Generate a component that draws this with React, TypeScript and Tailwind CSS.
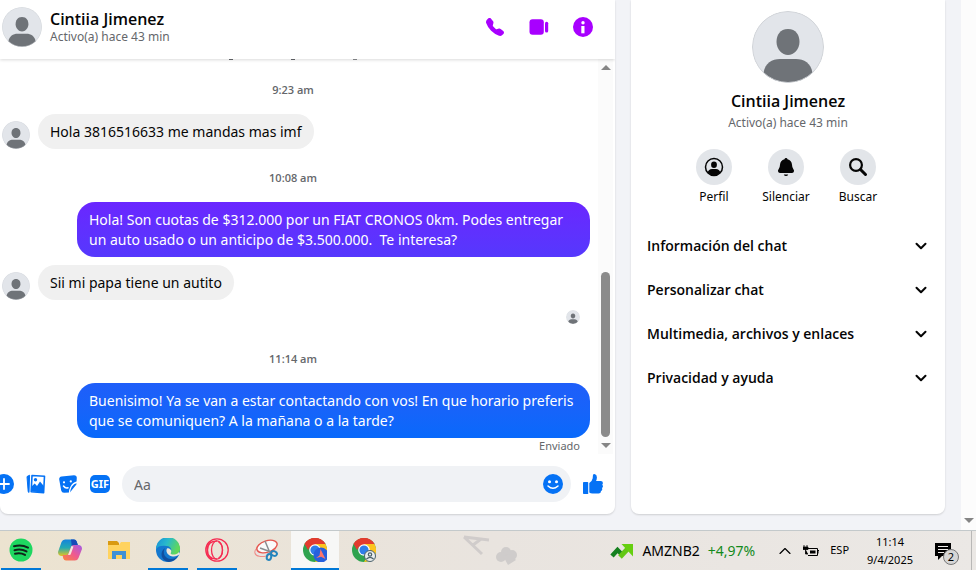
import type { ReactNode } from "react";
import { BsTelephoneFill } from "react-icons/bs";
import { ChevronDown, ChevronUp } from "lucide-react";

const messages = {
  lead: "Hola 3816516633 me mandas mas imf",
  offer: ["Hola! Son cuotas de $312.000 por un FIAT CRONOS 0km. Podes entregar", "un auto usado o un anticipo de $3.500.000.  Te interesa?"],
  reply: "Sii mi papa tiene un autito",
  followUp: ["Buenisimo! Ya se van a estar contactando con vos! En que horario preferis", "que se comuniquen? A la mañana o a la tarde?"],
};

const sections = ["Información del chat", "Personalizar chat", "Multimedia, archivos y enlaces", "Privacidad y ayuda"];

const Avatar = ({ className }: { className: string }) => (
  <svg viewBox="0 0 72 72" className={`shrink-0 rounded-full ${className}`} aria-hidden="true">
    <circle cx="36" cy="36" r="36" fill="#e2e5ea" />
    <path d="M36 18c8 0 11.500 6 11.500 13S42 44 36 44s-11.500-6-11.500-13S28 18 36 18z" fill="#6f7378" />
    <path d="M11.500 62C13 52 20 48 28 48h16c8 0 15 4 16.500 14A36 36 0 0 1 11.500 62z" fill="#6f7378" />
    <circle cx="36" cy="36" r="35.500" fill="none" stroke="#d0d3d7" />
  </svg>
);

const TimeLabel = ({ children }: { children: ReactNode }) => (
  <div className="pt-5 pb-[15px] pr-1.5 text-center font-['Open_Sans',sans-serif] text-[11px] font-semibold leading-[18px] text-[#65676b]">{children}</div>
);

const Incoming = ({ children }: { children: ReactNode }) => (
  <div className="flex items-end gap-2">
    <Avatar className="size-7" />
    <p className="rounded-[18px] bg-[#f0f0f0] px-3 pt-2 pb-[7px] text-[14px] leading-5 text-[#050505]">{children}</p>
  </div>
);

const Outgoing = ({ lines, className }: { lines: string[]; className: string }) => (
  <p className={`ml-[75px] rounded-[18px] px-3 pt-2 pb-[7px] text-[14px] leading-5 text-white ${className}`}>
    {lines.map((line) => (
      <span key={line} className="block whitespace-pre">
        {line}
      </span>
    ))}
  </p>
);

const Arrow = ({ up }: { up?: boolean }) => (
  <svg viewBox="0 0 10 5" className="h-[5px] w-2.5" aria-hidden="true">
    <path d={up ? "M0 5 5 0l5 5z" : "M0 0l5 5 5-5z"} fill="#858585" />
  </svg>
);

const ChatHeader = () => (
  <header className="z-10 flex h-[59px] shrink-0 items-center bg-white pl-0.5 pr-3.5 pb-[5px] shadow-[0_1px_3px_rgba(0,0,0,0.15)]">
    <Avatar className="size-10" />
    <div className="ml-2 flex-1">
      <h1 className="font-['Open_Sans',sans-serif] text-[16px] font-semibold leading-5 text-[#050505]">Cintiia Jimenez</h1>
      <p className="text-[12px] leading-4 text-[#65676b]">Activo(a) hace 43 min</p>
    </div>
    <div className="flex gap-2 text-[#a800ff]">
      <button aria-label="Llamar" className="flex size-9 items-center justify-center">
        <BsTelephoneFill className="size-[18px]" />
      </button>
      <button aria-label="Videollamada" className="flex size-9 items-center justify-center">
        <svg viewBox="0 0 20 20" className="size-5" fill="currentColor">
          <rect x="0.500" y="2.200" width="14.300" height="15.600" rx="3" />
          <rect x="16" y="4.800" width="3.200" height="10.600" rx="1.500" />
        </svg>
      </button>
      <button aria-label="Información" className="flex size-9 items-center justify-center">
        <svg viewBox="0 0 20 20" className="size-5">
          <circle cx="10" cy="10" r="10" fill="currentColor" />
          <circle cx="10" cy="5.800" r="1.700" fill="#fff" />
          <path d="M8.300 9h3.200v7.300H8.300z" fill="#fff" />
        </svg>
      </button>
    </div>
  </header>
);

const Composer = () => (
  <form className="flex h-[60px] shrink-0 items-center pr-3 text-[#0572f5]">
    <div className="-ml-3 flex">
      <button type="button" aria-label="Más acciones" className="flex w-8 justify-center">
        <svg viewBox="0 0 20 20" className="size-5">
          <circle cx="10" cy="10" r="10" fill="currentColor" />
          <path d="M10 5v10M5 10h10" stroke="#fff" strokeWidth="1.800" strokeLinecap="round" />
        </svg>
      </button>
      <button type="button" aria-label="Adjuntar foto" className="flex w-8 justify-center">
        <svg viewBox="0 0 20 20" className="size-5">
          <path d="M1 2.600 3.600 1.200 3 18.500 2.200 17.800z" fill="currentColor" stroke="currentColor" strokeLinejoin="round" />
          <path d="M6 1.500 18.500 2.200 17.600 18.700 5.200 17.800z" fill="#fff" stroke="currentColor" strokeWidth="1.600" strokeLinejoin="round" />
          <path d="M5.500 12.500 8.700 9.500l2.300 2.400 3-4.300 4 4.600-.3 6.200-12.400-.8z" fill="currentColor" />
          <circle cx="9.500" cy="5.800" r="1.700" fill="currentColor" />
        </svg>
      </button>
      <button type="button" aria-label="Elegir sticker" className="flex w-8 justify-center">
        <svg viewBox="0 0 20 20" className="size-5">
          <path d="M3.600 2.400 16 1.200q2.800 0 2.800 2.500l-.4 6.800-6.500 8-5.900.3q-2.300 0-2.800-2.200L1.200 5.400q-.2-2.600 2.400-3z" fill="currentColor" />
          <path d="M19.500 8q-4.500 1.200-6.300 4.500-1.600 3-1.700 6.500" fill="none" stroke="#fff" strokeWidth="1.300" />
          <path d="M5.500 12q2 2.800 4.500 1.800" fill="none" stroke="#fff" strokeWidth="1.500" strokeLinecap="round" />
          <circle cx="6" cy="8.300" r="1.100" fill="#fff" />
          <circle cx="12.800" cy="7.400" r="1.100" fill="#fff" />
        </svg>
      </button>
      <button type="button" aria-label="Elegir GIF" className="flex w-8 items-center justify-center">
        <span className="h-[18px] w-5 rounded-[5px] bg-[#0572f5] text-center text-[11px] font-bold leading-[18px] text-white">GIF</span>
      </button>
    </div>
    <div className="ml-1.5 flex h-9 flex-1 items-center rounded-full bg-[#f0f2f5] pl-3 pr-2">
      <input aria-label="Mensaje" placeholder="Aa" className="min-w-0 flex-1 bg-transparent text-[14px] text-[#050505] outline-none placeholder:text-[#65676b]" />
      <button type="button" aria-label="Elegir emoji">
        <svg viewBox="0 0 20 20" className="size-5">
          <circle cx="10" cy="10" r="10" fill="currentColor" />
          <circle cx="6.500" cy="7.700" r="1.500" fill="#fff" />
          <circle cx="13.500" cy="7.700" r="1.500" fill="#fff" />
          <path d="M5 12q5 4.600 10 0" fill="none" stroke="#fff" strokeWidth="1.500" strokeLinecap="round" />
        </svg>
      </button>
    </div>
    <button type="button" aria-label="Enviar me gusta" className="ml-3">
      <svg viewBox="0 0 20 20" className="size-5" fill="currentColor">
        <path d="M0 8.700q0-.8.800-.8h3.700q.7 0 .7.800V20H.8q-.8 0-.8-.8z" />
        <path d="M6.300 9q2.900-1.700 3.400-4.700L9.900 1.500Q10 .1 11.400.1q2.600.4 2.500 3.300-.1 2-.8 3.700h4.700q2.200.2 2.100 2 0 1-.7 1.600 1 .7.700 2-.2 1-1 1.400.6.900.2 1.800-.4.800-1.200 1.100.3 2.200-2.300 2.400H9.500q-2 0-3.200-1z" />
      </svg>
    </button>
  </form>
);

const ChatPanel = () => (
  <section className="flex min-w-0 flex-1 flex-col overflow-hidden rounded-b-lg bg-white shadow-[0_1px_2px_rgba(0,0,0,0.15)]">
    <ChatHeader />
    <div className="flex min-h-0 flex-1">
      <div className="min-w-0 flex-1 overflow-hidden pl-0.5 pr-2">
        {/* tail of the message scrolled under the header */}
        <div className="flex h-0.5 items-start justify-center gap-[58px] pr-1.5">
          <i className="h-px w-1 bg-[#65676b]" />
          <i className="h-px w-1 bg-[#65676b]" />
          <i className="h-px w-1 bg-[#8b8d90]" />
        </div>
        <TimeLabel>9:23 am</TimeLabel>
        <Incoming>{messages.lead}</Incoming>
        <TimeLabel>10:08 am</TimeLabel>
        <Outgoing lines={messages.offer} className="mb-2 bg-linear-to-b from-[#6a26ff] to-[#5538fd]" />
        <Incoming>{messages.reply}</Incoming>
        <div className="flex justify-end pt-2.5 pb-1.5 pr-2.5">
          <Avatar className="size-3.5" />
        </div>
        <TimeLabel>11:14 am</TimeLabel>
        <Outgoing lines={messages.followUp} className="bg-linear-to-b from-[#1f5ef9] to-[#0769fb]" />
        <p className="pr-2.5 text-right text-[11px] leading-4 text-[#65676b]">Enviado</p>
      </div>
      <div className="mr-0.5 flex w-[15px] flex-col items-center bg-[#fbfbfb] py-1.5">
        <Arrow up />
        <div className="min-h-0 flex-[201]" />
        <div className="min-h-0 w-[9px] flex-[165] rounded-full bg-[#8b8b8b]" />
        <div className="h-1.5" />
        <Arrow />
      </div>
    </div>
    <Composer />
  </section>
);

const QuickAction = ({ label, children }: { label: string; children: ReactNode }) => (
  <button className="flex w-[72px] flex-col items-center gap-1 text-[12px] leading-4 text-[#050505]">
    <span className="flex size-9 items-center justify-center rounded-full bg-[#e2e5e9]">
      <svg viewBox="0 0 20 20" className="size-5">
        {children}
      </svg>
    </span>
    {label}
  </button>
);

const InfoPanel = () => (
  <aside className="flex w-[314px] shrink-0 flex-col items-center rounded-b-lg bg-white pt-[11px] shadow-[0_1px_2px_rgba(0,0,0,0.15)]">
    <Avatar className="size-[72px]" />
    <h2 className="mt-2 font-['Open_Sans',sans-serif] text-[16px] font-semibold leading-5 text-[#050505]">Cintiia Jimenez</h2>
    <p className="mt-0.5 text-[12px] leading-5 text-[#65676b]">Activo(a) hace 43 min</p>
    <div className="mt-4 flex pr-1">
      <QuickAction label="Perfil">
        <circle cx="10" cy="10" r="8.500" fill="none" stroke="#050505" strokeWidth="1.500" />
        <ellipse cx="10" cy="7.800" rx="2.900" ry="3.200" fill="#050505" />
        <path d="M3.700 15.500Q4.500 12 8 12h4q3.500 0 4.300 3.500-2.500 3-6.300 3t-6.300-3z" fill="#050505" />
      </QuickAction>
      <QuickAction label="Silenciar">
        <path d="M10 1q1.300 0 1.500 1.300 4.200 1 4.500 5.500.1 3 1.400 4.500.8 1 .6 2-.3 1.700-2 1.700H4q-1.700 0-2-1.700-.2-1 .6-2Q3.900 10.800 4 7.800q.3-4.500 4.500-5.500Q8.700 1 10 1z" fill="#050505" />
        <path d="M7.800 17.500h4.400q-.5 1.500-2.200 1.500t-2.200-1.500z" fill="#050505" />
      </QuickAction>
      <QuickAction label="Buscar">
        <circle cx="8" cy="8" r="5.900" fill="none" stroke="#050505" strokeWidth="2.200" />
        <path d="m12.500 12.500 5 5" stroke="#050505" strokeWidth="3" strokeLinecap="round" />
      </QuickAction>
    </div>
    <div className="mt-[18px] w-full">
      {sections.map((title) => (
        <button key={title} className="flex h-11 w-full items-center justify-between pl-4 pr-[15px] font-['Open_Sans',sans-serif] text-[14px] font-semibold text-[#050505]">
          {title}
          <ChevronDown className="mt-0.5 size-[18px]" strokeWidth={2.700} />
        </button>
      ))}
    </div>
  </aside>
);

const Task = ({ name, state, children }: { name: string; state?: "open" | "active"; children: ReactNode }) => (
  <button aria-label={name} className={`flex w-12 flex-col items-center ${state === "active" ? "bg-[#f7f7f6]" : ""}`}>
    <span className="flex flex-1 items-center">
      <svg viewBox="0 0 24 24" className="size-6">
        {children}
      </svg>
    </span>
    {state && <span className={`h-0.5 bg-[#0078d7] ${state === "active" ? "w-full" : "w-10"}`} />}
    {!state && <span className="h-0.5" />}
  </button>
);

const ChromeMark = () => (
  <>
    <circle cx="12" cy="12" r="12" fill="#2fa34f" />
    <path d="M12 12 1.600 6A12 12 0 0 1 22.400 6z" fill="#e33b2e" />
    <path d="M12 6h10.400A12 12 0 0 1 12 24l5.200-9z" fill="#fcc31e" />
    <path d="M1.600 6 6.800 15 12 12z" fill="#2fa34f" />
    <path d="M1.600 6A12 12 0 0 1 22.400 6H12a6 6 0 0 0-5.500 3.500L5 12z" fill="#e33b2e" />
    <circle cx="12" cy="12" r="5.800" fill="#fff" />
    <circle cx="12" cy="12" r="4.600" fill="#2f7de9" />
  </>
);

const Taskbar = () => (
  <footer className="flex h-10 shrink-0 overflow-hidden border-t border-[#c3c9cb] bg-linear-to-r from-[#ece3d0] via-[#e9e4df] to-[#ebe8e5] text-black">
    <nav className="-ml-[3px] flex gap-px">
      <Task name="Spotify" state="open">
        <circle cx="12" cy="12" r="11.500" fill="#1ed760" />
        <path d="M5 8.300q7.500-2.100 14 1.300M5.500 12.200q6.500-1.800 12 1.200M6 15.800q5.500-1.400 10 1.100" fill="none" stroke="#10231a" strokeWidth="2" strokeLinecap="round" />
      </Task>
      <Task name="Copilot">
        <defs>
          <linearGradient id="cool" x1="0" y1="0" x2="0" y2="1">
            <stop offset="0" stopColor="#1483dc" />
            <stop offset=".5" stopColor="#22a9b3" />
            <stop offset="1" stopColor="#e6c51f" />
          </linearGradient>
          <linearGradient id="warm" x1="1" y1="0" x2="0" y2="1">
            <stop offset="0" stopColor="#a15be8" />
            <stop offset=".5" stopColor="#ef5990" />
            <stop offset="1" stopColor="#fb8738" />
          </linearGradient>
        </defs>
        <path d="M7 1.500h9q2 0 2.700 2l1.300 4h-4q-2 0-2.700 2L11 17q-.7 1-2 1H3q-3-.500-3-4L3.500 4Q4.500 1.500 7 1.500z" fill="url(#cool)" />
        <path d="M13 1.500h3q2 0 2.700 2L20 7.500h-4q-1.500 0-2.200 1z" fill="#1749b8" />
        <path d="M17 22.500H8q-2 0-2.700-2L4.500 17H8q2 0 2.700-2L13 8.500q.7-1.500 2.500-1.500H21q3 .500 3 4l-3.500 9q-1 2.500-3.500 2.500z" fill="url(#warm)" />
        <path d="M13.500 8 10 17h1.500q1 0 1.500-1.500l2.500-7z" fill="#f1eadd" />
      </Task>
      <Task name="Explorador de archivos">
        <path d="M1 3h9l2 2v4H1z" fill="#d99a12" />
        <path d="M1 7h11l2-3h9v17H1z" fill="#ffd35f" />
        <path d="M5 13h14v8h-4v-4H9v4H5z" fill="#3f91d4" />
      </Task>
      <Task name="Edge" state="open">
        <defs>
          <linearGradient id="edge" x1="0" y1="0" x2="1" y2=".4">
            <stop offset="0" stopColor="#168ddb" />
            <stop offset=".5" stopColor="#29bacb" />
            <stop offset="1" stopColor="#61d75a" />
          </linearGradient>
        </defs>
        <circle cx="12" cy="12" r="12" fill="#1478cf" />
        <path d="M0 11A12 12 0 0 1 24 11c0 4-3 6-7 6-3 0-4-1.500-2.500-3 2-2.500 0-6-4-6C6 7 2 8 0 11z" fill="url(#edge)" />
        <path d="M9 10c-3 5 0 11 6 11 3 0 5-1 7-3a12 12 0 0 1-9 6C5 23 3 14 9 10z" fill="#124f9e" />
        <path d="M11 10.500c-1.500 2.500 0 6.500 4.500 7.700 3 .800 6 0 8.500-2.200l-1-2c-2 2.500-6 3.300-8 2-1-.600.600-2 .2-3.300-.600-1.800-2.500-3-4.200-2.200z" fill="#eee7dc" />
      </Task>
      <Task name="Opera" state="open">
        <g fill="none" stroke="#f52c52" strokeWidth="1.300">
          <circle cx="12" cy="12" r="11.200" />
          <ellipse cx="12" cy="12" rx="5.500" ry="9.200" />
          <path d="M12 2.800C5 3 2.500 7 2.500 12s3 9 9.500 9.200M13.500 4q4 2 4 8t-4 8M6 3.500C0 9 1 17 7 21.500" />
        </g>
      </Task>
      <Task name="Recortes">
        <ellipse cx="11" cy="12" rx="10.500" ry="6" transform="rotate(-18 11 12)" fill="#e8e4e2" stroke="#ef8c87" />
        <ellipse cx="13" cy="8.500" rx="10.500" ry="5.700" transform="rotate(-18 13 8.500)" fill="#fafafa" stroke="#e5574f" strokeWidth="1.400" />
        <path d="m11 3 5 12M6 10l11 4" stroke="#8a8d91" strokeWidth="1.500" />
        <g fill="none" stroke="#2484bd" strokeWidth="2">
          <ellipse cx="15" cy="19" rx="2.200" ry="3" transform="rotate(15 15 19)" />
          <ellipse cx="20" cy="15.500" rx="3" ry="2.200" transform="rotate(20 20 15.500)" />
        </g>
      </Task>
      <Task name="Chrome" state="active">
        <ChromeMark />
        <circle cx="18" cy="17" r="7.500" fill="#2760dd" />
        <path d="m17.500 11 5 10-4.500-2.200-5 1.200 3.500-2.500z" fill="#ff756a" />
      </Task>
      <Task name="Chrome (perfil)">
        <ChromeMark />
        <circle cx="18" cy="18" r="5.500" fill="#e9edee" stroke="#4a616b" />
        <circle cx="18" cy="16.500" r="1.700" fill="none" stroke="#4a616b" strokeWidth="1.200" />
        <path d="M14.500 21q3.500-3.500 7 0" fill="none" stroke="#4a616b" strokeWidth="1.200" />
      </Task>
    </nav>
    <svg viewBox="0 0 80 39" className="ml-[70px] h-[39px] w-20" aria-hidden="true">
      <g fill="none" stroke="#d0cccb" strokeWidth="3">
        <path d="m6 6 25 3M6 6l18 17M15 14l8-6" />
      </g>
      <g fill="#cfcccb">
        <circle cx="48" cy="21" r="5" />
        <circle cx="43" cy="26" r="5" />
        <circle cx="54" cy="24" r="5" />
        <path d="m45 25 5 9 8-5-6-6z" />
      </g>
    </svg>
    <div className="flex-1" />
    <div className="flex items-center">
      <button className="flex items-center gap-2 text-[14px]">
        <svg viewBox="0 0 24 16" className="h-4 w-6" aria-hidden="true">
          <path d="m2 13 5.500-6 5 5" fill="none" stroke="#15801f" strokeWidth="4.500" />
          <path d="m10 14 7.500-8" stroke="#62c714" strokeWidth="5" />
          <path d="M11.500 1H23v12.500z" fill="#66cf10" />
        </svg>
        <span>AMZNB2</span>
        <span className="text-[#138a1b]">+4,97%</span>
      </button>
      <button aria-label="Mostrar iconos ocultos" className="ml-5">
        <ChevronUp className="size-5" strokeWidth={1.400} />
      </button>
      <svg viewBox="0 0 16 12" className="ml-2 h-3 w-4" aria-label="Batería">
        <path d="M5 3.500h9.500v7H5M14.500 5.500H16v3" fill="none" stroke="#000" />
        <path d="M7 5.500h5.500v3H7z" />
        <path d="M1 0v2M4 0v2M0 2h5v2.500H0zM2.500 4v5H5" stroke="#000" fill="#000" strokeWidth=".8" />
      </svg>
      <button className="ml-[11px] text-[11px]">ESP</button>
      <time className="ml-[18px] text-center text-[11px] leading-[18px]">
        11:14
        <br />
        9/4/2025
      </time>
      <button aria-label="Notificaciones" className="relative ml-[22px] mr-3 h-5 w-6">
        <svg viewBox="0 0 24 20" className="h-5 w-6">
          <path d="M0 2h16v13H7l-4 4v-4H0z" />
          <path d="M3 5.500h10M3 8.500h10M3 11.500h6" stroke="#f1efed" />
        </svg>
        <span className="absolute left-2 top-2 size-4 rounded-full border border-[#777] bg-[#d6d6d6] text-center text-[11px] leading-[14px]">2</span>
      </button>
      <div className="w-[5px] self-stretch border-l border-[#b9b8b7]" />
    </div>
  </footer>
);

const App = () => (
  <div className="flex h-screen flex-col bg-[#f2f3f7] font-['Noto_Sans','Open_Sans',sans-serif]">
    <main className="flex min-h-0 flex-1">
      <div className="flex min-w-0 flex-1 gap-4 pb-4 pr-4">
        <ChatPanel />
        <InfoPanel />
      </div>
      <div className="flex w-[15px] shrink-0 flex-col items-center justify-end bg-[#fcfcfc] pb-[7px]">
        <Arrow />
      </div>
    </main>
    <Taskbar />
  </div>
);

export default App;
